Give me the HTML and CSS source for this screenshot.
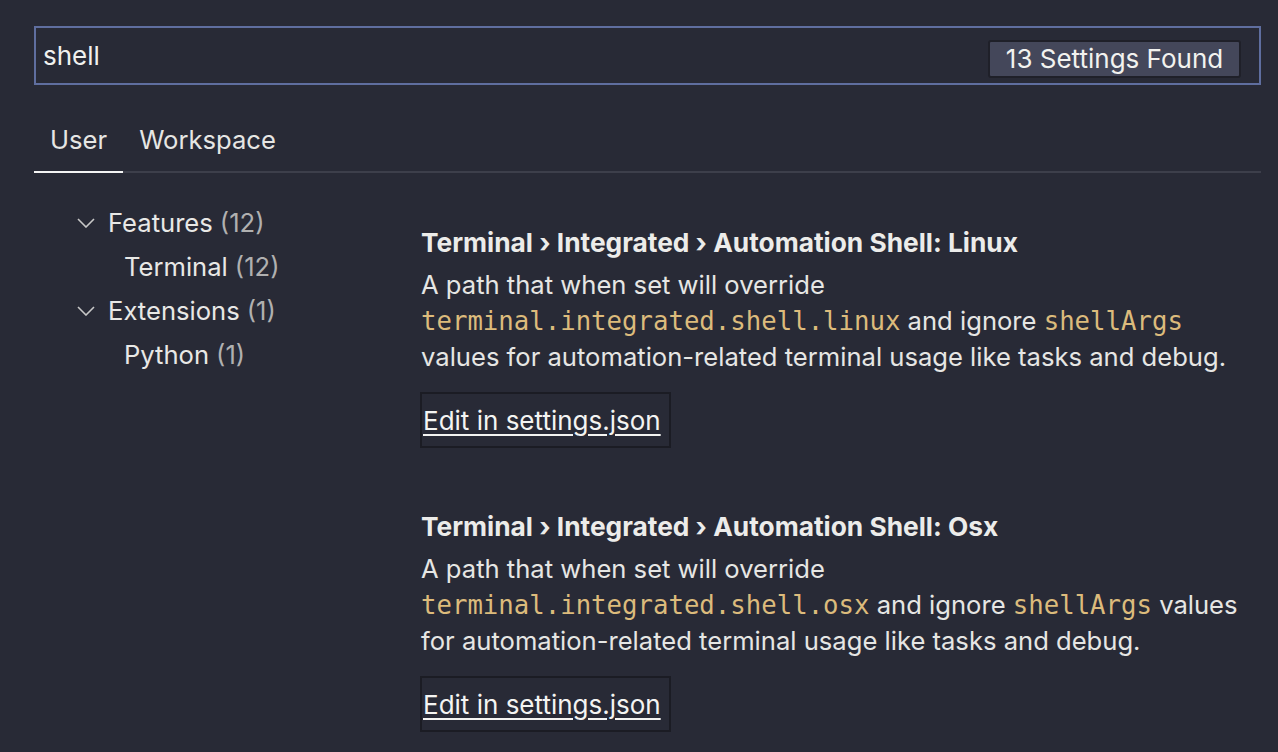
FILE: index.html
```html
<!DOCTYPE html>
<html>
<head>
<meta charset="utf-8">
<link rel="stylesheet" href="styles.css">
</head>
<body>
<div class="page">
  <div class="search">
    <span class="query">shell</span>
    <span class="badge">13 Settings Found</span>
  </div>
  <div class="tabs">
    <div class="tab active">User</div>
    <div class="tab">Workspace</div>
  </div>
  <div class="main">
    <nav class="tree">
      <div class="row group"><svg class="chev" viewBox="0 0 18 10"><path d="M1 1 L9 9 L17 1" fill="none" stroke="#c8c8c8" stroke-width="1.6"/></svg><span>Features</span><span class="count">(12)</span></div>
      <div class="row child"><span>Terminal</span><span class="count">(12)</span></div>
      <div class="row group"><svg class="chev" viewBox="0 0 18 10"><path d="M1 1 L9 9 L17 1" fill="none" stroke="#c8c8c8" stroke-width="1.6"/></svg><span>Extensions</span><span class="count">(1)</span></div>
      <div class="row child"><span>Python</span><span class="count">(1)</span></div>
    </nav>
    <section class="settings">
      <div class="setting">
        <div class="title">Terminal › Integrated › Automation Shell: Linux</div>
        <p class="desc">A path that when set will override<br><code>terminal.integrated.shell.linux</code> and ignore <code>shellArgs</code><br>values for automation-related terminal usage like tasks and debug.</p>
        <a class="edit">Edit in settings.json</a>
      </div>
      <div class="setting">
        <div class="title">Terminal › Integrated › Automation Shell: Osx</div>
        <p class="desc">A path that when set will override<br><code>terminal.integrated.shell.osx</code> and ignore <code>shellArgs</code> values<br>for automation-related terminal usage like tasks and debug.</p>
        <a class="edit">Edit in settings.json</a>
      </div>
    </section>
  </div>
</div>
</body>
</html>
```
FILE: styles.css
```css
* { box-sizing: border-box; }
html, body {
  margin: 0;
  background: #282a36;
  color: #e8e8e6;
  font-family: "Inter", "Noto Sans", sans-serif;
  overflow: hidden;
}
.page {
  padding: 26px 17px 0 34px;
  height: 752px;
  overflow: hidden;
}
.search {
  height: 59px;
  border: 2px solid #5f6e9f;
  display: flex;
  align-items: center;
  justify-content: space-between;
  padding: 0 18px 0 7px;
}
.query {
  font-size: 26px;
  color: #f0f0ee;
}
.badge {
  height: 38px;
  width: 253px;
  background: #44475a;
  border: 2px solid #1f2029;
  border-radius: 3px;
  font-size: 26px;
  color: #f2f2ef;
  display: flex;
  align-items: center;
  justify-content: center;
  margin-top: 6px;
}
.tabs {
  display: flex;
  margin-top: 27px;
  border-bottom: 2px solid #3d3f4b;
}
.tab {
  font-size: 25.6px;
  padding: 0 16px 4px;
  height: 59px;
  display: flex;
  align-items: center;
  color: #e6e6e4;
}
.tab.active {
  border-bottom: 2px solid #f4f4f4;
  margin-bottom: -2px;
  height: 61px;
}
.main {
  display: flex;
  margin-top: 26px;
}
.tree {
  width: 387px;
  padding-left: 43px;
  padding-top: 1px;
}
.row {
  height: 44px;
  display: flex;
  align-items: center;
  font-size: 25.6px;
  color: #e8e8e6;
  gap: 7px;
}
.row.child { padding-left: 47px; }
.chev {
  width: 18px;
  height: 10px;
  margin-right: 6px;
  margin-top: 2px;
}
.count { color: #b0b0b0; }
.settings {
  flex: 1;
  padding-top: 26px;
}
.setting {
  height: 284px;
}
.title {
  font-size: 26.3px;
  font-weight: 700;
  line-height: 36px;
  color: #ececea;
}
.desc {
  margin: 6px 0 0 0;
  font-size: 25.6px;
  line-height: 36px;
  color: #e6e6e4;
}
code {
  font-family: "DejaVu Sans Mono", monospace;
  font-size: 25.7px;
  color: #dcbb7c;
}
.edit {
  display: inline-flex;
  align-items: center;
  margin-top: 17px;
  height: 56px;
  padding: 0 8px 0 1px;
  margin-left: -1px;
  border: 2px solid #1b1c24;
  font-size: 26px;
  color: #f4f4f2;
  text-decoration: underline;
  text-underline-offset: 4px;
  text-decoration-thickness: 2px;
}
```
